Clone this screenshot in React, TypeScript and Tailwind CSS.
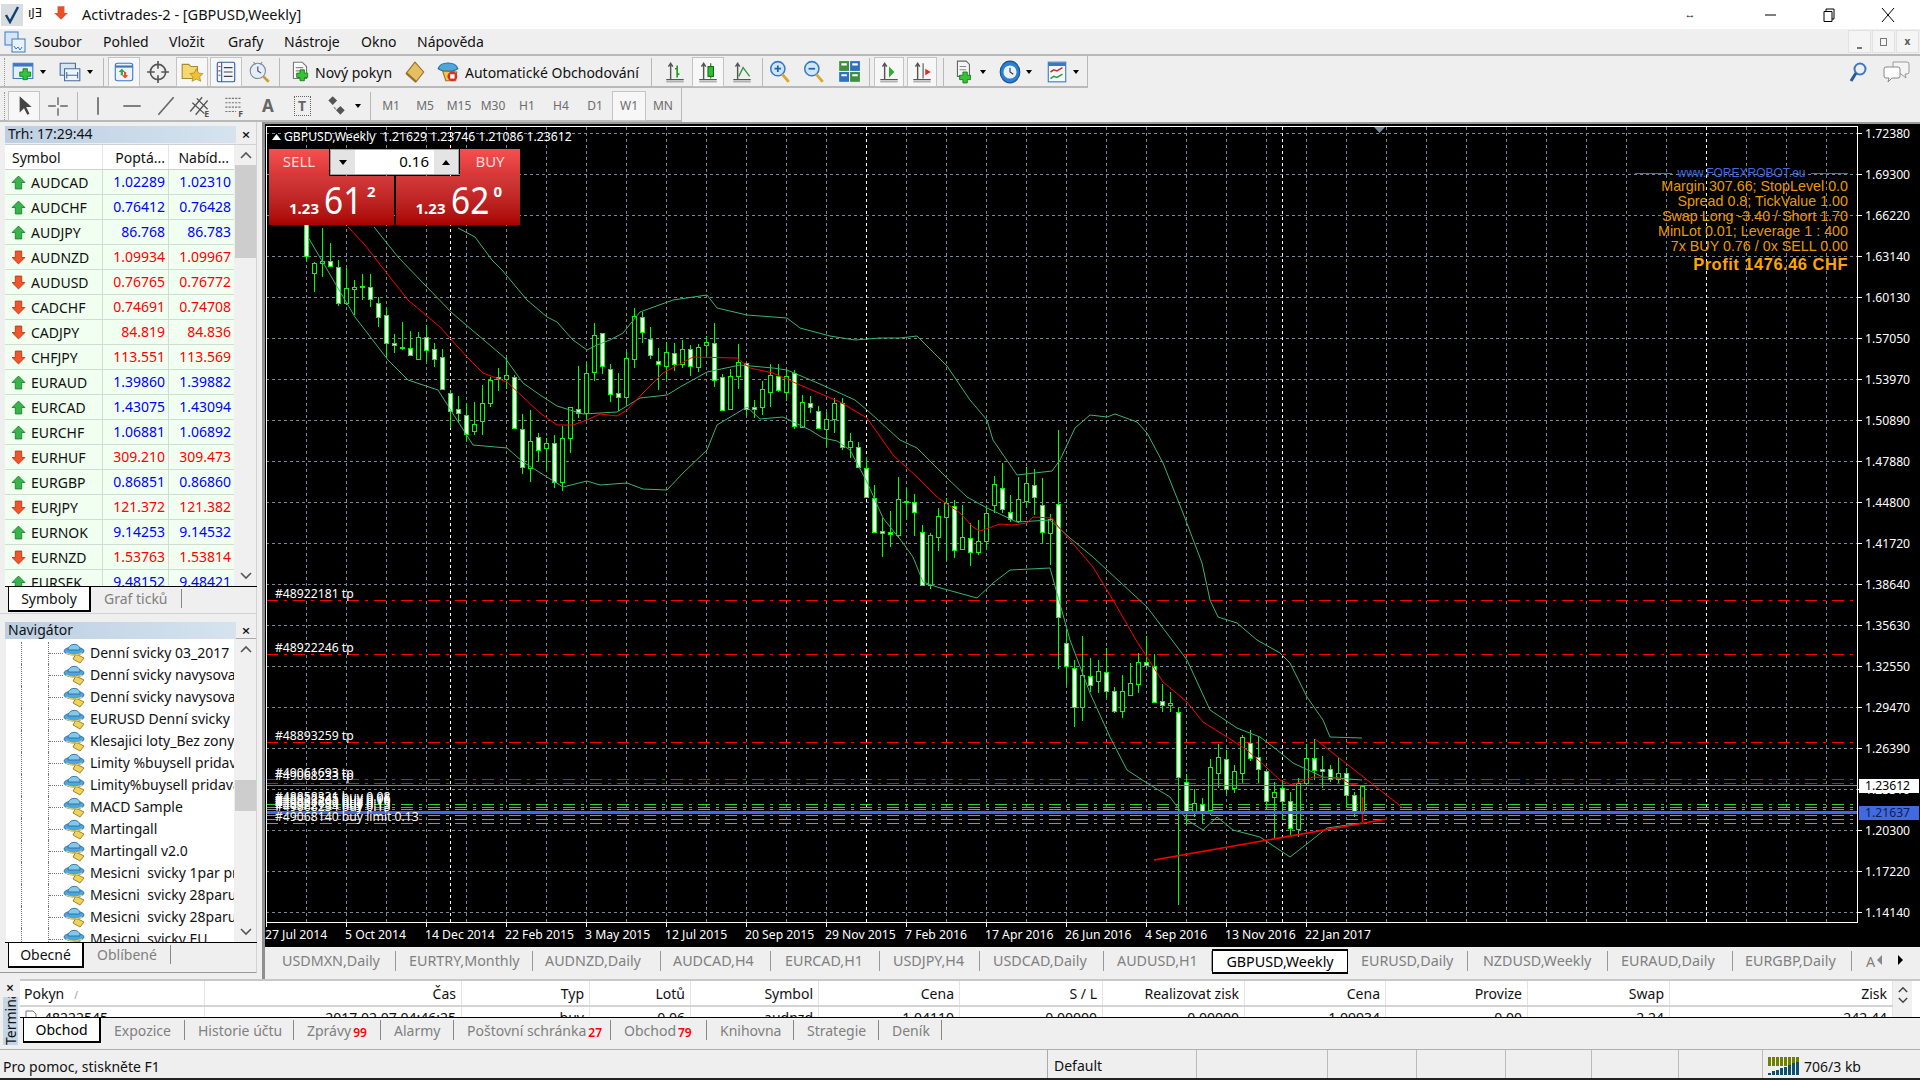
import type { ReactNode } from "react";

// [high, bodyTop, bodyBottom, low, white] in page pixels, first bar is at x=306, 8px apart
const bars: number[][] = [
  [200,200,256,262,1],[262,263,273,292,0],[228,261,263,277,0],[243,261,266,267,1],[260,267,303,306,1],
  [268,288,303,305,0],[280,287,289,315,0],[274,286,287,300,0],[274,287,299,307,1],[297,303,317,327,1],
  [307,315,343,357,1],[334,343,345,353,1],[322,347,348,350,0],[331,348,355,356,1],[332,337,359,360,0],
  [325,337,350,362,1],[343,349,359,367,1],[349,357,389,390,1],[390,393,411,428,1],[396,409,413,423,1],
  [403,415,434,441,1],[402,424,431,435,0],[385,403,421,435,0],[377,380,403,407,0],[368,377,379,391,1],
  [358,375,379,389,0],[375,377,428,428,1],[414,429,467,474,1],[410,441,468,482,0],[433,437,450,462,1],
  [438,443,448,471,0],[435,443,482,488,1],[426,438,482,491,0],[407,407,438,453,0],[366,409,413,418,1],
  [363,373,413,421,0],[323,335,372,381,0],[333,333,366,374,1],[364,369,394,402,1],[373,393,397,411,1],
  [352,358,397,404,0],[308,316,359,368,0],[312,317,332,343,1],[327,339,355,359,1],[348,361,364,390,1],
  [342,352,366,380,0],[343,353,364,371,1],[340,349,364,368,0],[345,349,366,376,1],[344,347,367,372,0],
  [336,342,345,357,0],[323,343,380,387,1],[374,377,410,411,1],[369,376,409,410,0],[344,362,376,389,0],
  [363,363,409,416,1],[400,407,409,418,1],[381,389,407,415,0],[364,375,392,407,0],[364,376,390,392,1],
  [369,376,392,401,0],[370,373,426,429,1],[395,402,427,428,0],[396,403,407,413,1],[406,411,428,429,1],
  [412,419,429,447,0],[398,403,419,433,0],[398,403,447,450,1],[433,441,447,458,0],[442,447,467,468,1],
  [457,468,497,498,1],[485,498,532,533,1],[518,531,533,557,1],[511,532,534,547,1],[477,499,535,537,0],
  [488,501,502,520,0],[494,502,512,536,1],[525,532,585,586,1],[533,535,585,589,0],[508,516,537,551,0],
  [498,503,517,561,0],[500,506,550,558,1],[505,537,549,550,0],[523,538,552,566,1],[520,541,552,555,0],
  [506,513,541,550,0],[476,484,505,513,0],[463,488,509,513,1],[495,512,519,522,1],[477,499,521,523,0],
  [467,483,501,508,0],[469,485,497,515,1],[478,505,532,543,1],[514,519,533,565,0],[430,504,617,669,1],
  [629,643,666,685,1],[660,668,707,727,1],[636,675,707,721,0],[658,676,685,692,1],[660,671,681,693,0],
  [648,672,691,698,1],[687,691,711,713,1],[675,691,711,718,0],[663,683,695,695,0],[653,662,684,693,0],
  [636,662,665,668,1],[654,666,702,702,1],[684,701,705,712,1],[692,703,705,712,0],[707,712,777,905,1],
  [774,782,812,825,1],[789,803,813,817,0],[798,804,812,823,1],[759,767,810,815,0],[744,757,773,788,0],
  [750,759,789,794,1],[765,771,788,793,0],[735,737,773,783,0],[730,743,758,761,1],[737,757,769,783,1],
  [769,771,801,810,1],[782,792,797,838,0],[780,788,801,820,1],[792,801,828,835,1],[778,783,829,837,0],
  [744,758,783,785,0],[739,758,770,780,1],[756,769,771,788,1],[765,769,779,782,1],[758,773,779,783,0],
  [768,773,795,807,1],[792,795,812,817,1],[785,786,812,822,0],
];

const maLine = "348,227 365,245 382,267 408,300 428,317 440,327 467,357 483,373 507,382 540,413 557,425 573,425 587,420 600,414 617,416 627,410 643,393 663,373 693,357 737,358 750,368 773,373 800,385 840,402 867,418 893,455 917,477 937,497 960,513 973,527 980,531 1000,524 1013,525 1027,523 1033,517 1052,518 1057,525 1070,540 1093,567 1113,600 1136,640 1163,682 1187,702 1203,722 1227,737 1247,750 1267,768 1280,780 1292,785 1313,777 1340,778 1350,784 1362,786";
const upperBand = "458,228 475,237 492,260 502,270 527,300 547,317 557,322 573,340 587,350 597,345 610,340 623,333 640,312 673,300 707,295 717,308 747,315 787,318 800,328 830,336 855,340 880,338 900,338 917,336 947,366 970,400 987,420 993,440 1017,475 1052,471 1060,460 1075,428 1090,415 1107,417 1115,414 1137,422 1147,433 1163,463 1183,513 1202,563 1210,600 1218,617 1237,623 1257,640 1280,653 1290,663 1307,697 1323,720 1330,737 1362,738";
const midBand = "374,227 398,257 452,313 505,358 523,383 540,395 557,406 583,414 617,412 640,398 667,395 680,387 707,372 740,365 773,368 787,370 820,384 855,400 867,410 900,440 917,448 947,478 967,497 987,508 1017,522 1050,520 1070,538 1093,557 1147,607 1172,640 1187,660 1210,710 1237,728 1260,737 1277,750 1293,763 1323,777 1362,780";
const lowerBand = "308,237 355,317 388,360 408,380 438,390 457,420 473,445 507,448 523,462 547,477 563,487 587,481 600,485 627,483 643,489 667,490 683,473 707,450 717,425 747,407 760,419 783,417 810,430 823,438 837,441 850,450 867,482 883,518 903,543 913,557 923,582 937,587 977,598 993,583 1010,570 1050,568 1070,640 1090,693 1110,737 1127,770 1147,783 1170,797 1187,820 1203,830 1217,817 1233,830 1260,837 1290,857 1303,847 1327,828 1362,823";

const prices = ["1.72380","1.69300","1.66220","1.63140","1.60130","1.57050","1.53970","1.50890","1.47880","1.44800","1.41720","1.38640","1.35630","1.32550","1.29470","1.26390","1.23310","1.20300","1.17220","1.14140"];
const dates = ["27 Jul 2014","5 Oct 2014","14 Dec 2014","22 Feb 2015","3 May 2015","12 Jul 2015","20 Sep 2015","29 Nov 2015","7 Feb 2016","17 Apr 2016","26 Jun 2016","4 Sep 2016","13 Nov 2016","22 Jan 2017"];
const orderLabels: [string, number][] = [
  ["#48922181 tp", 598],["#48922246 tp", 652],["#48893259 tp", 740],["#49061693 tp", 777],["#49068233 tp", 780],
  ["#48858331 buy 0.08", 801],["#48922545 buy 0.06", 803],["#48893262 buy 0.16", 805],["#49061690 buy 0.13", 807],["#48922183 buy 0.13", 809],["#49068234 buy 0.13", 811],["#49068140 buy limit 0.13", 821],
];

const symbols: [string, string, string, boolean][] = [
  ["AUDCAD","1.02289","1.02310",true],["AUDCHF","0.76412","0.76428",true],["AUDJPY","86.768","86.783",true],
  ["AUDNZD","1.09934","1.09967",false],["AUDUSD","0.76765","0.76772",false],["CADCHF","0.74691","0.74708",false],
  ["CADJPY","84.819","84.836",false],["CHFJPY","113.551","113.569",false],["EURAUD","1.39860","1.39882",true],
  ["EURCAD","1.43075","1.43094",true],["EURCHF","1.06881","1.06892",true],["EURHUF","309.210","309.473",false],
  ["EURGBP","0.86851","0.86860",true],["EURJPY","121.372","121.382",false],["EURNOK","9.14253","9.14532",true],
  ["EURNZD","1.53763","1.53814",false],["EURSEK","9.48152","9.48421",true],
];

const experts = ["Denní svicky 03_2017","Denní svicky navysovani","Denní svicky navysovani","EURUSD Denní svicky 1par","Klesajici loty_Bez zony","Limity %buysell pridavani","Limity%buysell pridavani","MACD Sample","Martingall","Martingall v2.0","Mesicni  svicky 1par pro","Mesicni  svicky 28paru","Mesicni  svicky 28paru","Mesicni  svicky EU"];

const chartTabs: [string, string, string][] = [
  ["USDMXN,Daily","w-[131px]","pl-[17px]"],["EURTRY,Monthly","w-[137px]","pl-[13px]"],["AUDNZD,Daily","w-[128px]","pl-[12px]"],["AUDCAD,H4","w-[110px]","pl-[12px]"],["EURCAD,H1","w-[109px]","pl-[14px]"],["USDJPY,H4","w-[100px]","pl-[13px]"],["USDCAD,Daily","w-[124px]","pl-[13px]"],["AUDUSD,H1","w-[108px]","pl-[13px]"],
];
const chartTabsAfter: [string, string, string][] = [
  ["EURUSD,Daily","w-[120px]","pl-[13px]"],["NZDUSD,Weekly","w-[140px]","pl-[15px]"],["EURAUD,Daily","w-[125px]","pl-[13px]"],["EURGBP,Daily","w-[119px]","pl-[12px]"],
];

const columns: [string, string, string][] = [
  ["Pokyn","","w-[185px]"],["Čas","2017.02.07 04:46:25","w-[257px]"],["Typ","buy","w-[128px]"],["Lotů","0.06","w-[101px]"],
  ["Symbol","audnzd","w-[128px]"],["Cena","1.04110","w-[141px]"],["S / L","0.00000","w-[143px]"],["Realizovat zisk","0.00000","w-[142px]"],
  ["Cena","1.09934","w-[141px]"],["Provize","0.00","w-[142px]"],["Swap","2.24","w-[142px]"],["Zisk","242.44","w-[223px]"],
];

const termTabs: [string, string, string?][] = [
  ["Expozice","w-[71px]"],["Historie účtu","w-[109px]"],["Zprávy","w-[87px]","99"],["Alarmy","w-[73px]"],["Poštovní schránka","w-[157px]","27"],["Obchod","w-[96px]","79"],["Knihovna","w-[87px]"],["Strategie","w-[85px]"],["Deník","w-[63px]"],
];

const Svg = ({ children, s = 24 }: { children: ReactNode; s?: number }) => (
  <svg width={s} height={s} viewBox="0 0 22 22">{children}</svg>
);

const Tool = ({ w, on, children }: { w: string; on?: boolean; children?: ReactNode }) => (
  <div className={`${w} h-[30px] flex items-center justify-center shrink-0 ${on ? "bg-[#f7f7f7] border border-[#c4c4c4]" : ""}`}>{children}</div>
);

const Drop = ({ w = "w-[8px]" }: { w?: string }) => (
  <div className={`${w} flex justify-center shrink-0`}>
    <div className="border-x-[3px] border-t-[4px] border-x-transparent border-t-black" />
  </div>
);

const Sep = ({ className = "" }: { className?: string }) => <div className={`w-px h-[28px] bg-[#b8b8b8] shrink-0 ${className}`} />;

const Grip = () => (
  <div className="w-[8px] h-[28px] shrink-0 flex justify-center">
    <div className="w-px h-full border-l border-dotted border-[#999]" />
  </div>
);

const PlusMark = ({ x = 10, y = 10 }: { x?: number; y?: number }) => (
  <path d={`M${x + 3} ${y}h4v3h3v4h-3v3h-4v-3h-3v-4h3z`} fill="#35c435" stroke="#1a7a1a" strokeWidth="0.8" />
);

const AxisIcon = ({ children }: { children?: ReactNode }) => (
  <Svg>
    <path d="M7 3v15M3 18h16M5 6l2-3 2 3" fill="none" stroke="#555" strokeWidth="1.3" />
    <path d="M3 20h16" stroke="#999" />
    {children}
  </Svg>
);

const ArrowUp = () => (
  <svg width="15" height="15" viewBox="0 0 14 14" className="shrink-0"><path d="M7 1l6 6h-3v6H4V7H1z" fill="#37b44a" stroke="#1e7a30" strokeWidth="0.8" /></svg>
);
const ArrowDown = () => (
  <svg width="15" height="15" viewBox="0 0 14 14" className="shrink-0"><path d="M4 1h6v6h3l-6 6-6-6h3z" fill="#f0562a" stroke="#b8341a" strokeWidth="0.8" /></svg>
);

const HatIcon = () => (
  <svg width="23" height="22" viewBox="0 0 23 22" className="shrink-0">
    <path d="M13 12l8 4-4 5-7-4z" fill="#f2d35a" stroke="#8f7a28" strokeWidth="0.9" />
    <ellipse cx="11" cy="9" rx="10" ry="4" fill="#4da6dc" stroke="#2b6ea3" strokeWidth="0.9" />
    <path d="M5 8c0-7 12-8 12 0z" fill="#86c8ea" stroke="#2b6ea3" strokeWidth="0.9" />
    <path d="M3 11c5 2.500 11 2.500 16 0" fill="none" stroke="#f2d35a" strokeWidth="1.200" />
  </svg>
);

const ScrollBar = ({ thumb, spacer }: { thumb: string; spacer: string }) => (
  <div className="w-[21px] h-full flex flex-col items-center shrink-0 bg-[#f0f0f0]">
    <div className="h-[20px] flex items-center justify-center shrink-0">
      <svg width="12" height="8" viewBox="0 0 12 8"><path d="M1 7l5-5 5 5" fill="none" stroke="#555" strokeWidth="1.6" /></svg>
    </div>
    <div className={`${spacer} shrink-0`} />
    <div className={`${thumb} w-full bg-[#cdcdcd] shrink-0`} />
    <div className="flex-1" />
    <div className="h-[20px] flex items-center justify-center shrink-0">
      <svg width="12" height="8" viewBox="0 0 12 8"><path d="M1 1l5 5 5-5" fill="none" stroke="#555" strokeWidth="1.6" /></svg>
    </div>
  </div>
);

const PanelTitle = ({ title }: { title: string }) => (
  <div className="flex items-center">
    <div className="w-[232px] ml-[5px] h-[17px] px-[3px] bg-gradient-to-r from-[#bccfe2] to-[#d6e3ef] text-[14px] leading-[15px] whitespace-nowrap">{title}</div>
    <div className="w-[20px] text-center text-[15px] leading-[17px] font-semibold">×</div>
  </div>
);

const PanelTabs = ({ first, second, w }: { first: string; second: string; w: string }) => (
  <div className="h-[26px] ml-[5px] w-[252px] border-t border-black flex text-[14px]">
    <div className={`${w} ml-[3px] h-[25px] bg-white border-l border-r-2 border-b-2 border-black flex items-center justify-center`}>{first}</div>
    <div className="h-[19px] mt-[2px] flex items-center px-[13px] border-r border-[#888] text-[#808080]">{second}</div>
  </div>
);

const Chart = () => (
  <svg width="1655" height="823" viewBox="265 124 1655 823" className="block font-['Noto_Sans',sans-serif]">
    <g shapeRendering="crispEdges">
      {prices.map((_, i) => (
        <line key={i} x1="266" x2="1858" y1={133.5 + Math.round(i * 40.98)} y2={133.5 + Math.round(i * 40.98)} stroke="#778899" strokeDasharray="3 3" />
      ))}
      {Array.from({ length: 39 }, (_, k) => (
        <line key={k} x1={306.5 + 40 * k} x2={306.5 + 40 * k} y1="127" y2="922" stroke="#778899" strokeDasharray="3 3" />
      ))}
      {[450.5, 866.5, 1282.5, 1706.5].map((x) => (
        <line key={x} x1={x} x2={x} y1="127" y2="922" stroke="#ffffff" strokeDasharray="3 3" />
      ))}
      {[600.5, 654.5, 742.5, 779.5, 783.5].map((y) => (
        <line key={y} x1="266" x2="1858" y1={y} y2={y} stroke="#ff0000" strokeDasharray="12 6 3 6" />
      ))}
      {[804.5, 807.5, 809.5, 815.5, 819.5, 823.5].map((y) => (
        <line key={y} x1="266" x2="1858" y1={y} y2={y} stroke="#32cd32" strokeDasharray="12 6 3 6" />
      ))}
      {bars.map(([h, t, b, l, w], i) => {
        const x = 306 + 8 * i;
        return (
          <g key={i}>
            <line x1={x + 0.5} x2={x + 0.5} y1={h} y2={l} stroke="#00ff00" />
            <rect x={x - 1.5} y={t + 0.5} width="4" height={Math.max(b - t, 1)} fill={w ? "#ffffff" : "#000000"} stroke="#00ff00" />
          </g>
        );
      })}
    </g>
    <g fill="none" strokeWidth="1">
      <polyline points={upperBand} stroke="#3cb371" />
      <polyline points={midBand} stroke="#3cb371" />
      <polyline points={lowerBand} stroke="#3cb371" />
      <polyline points={maLine} stroke="#ff0000" />
      <line x1="1315" y1="739" x2="1403" y2="808" stroke="#ff0000" />
      <line x1="1362.5" y1="797" x2="1362.5" y2="822" stroke="#ff0000" strokeWidth="1.5" />
      <line x1="1154" y1="860" x2="1387" y2="819" stroke="#ff0000" strokeWidth="1.6" />
    </g>
    <g shapeRendering="crispEdges">
      <line x1="266" x2="1858" y1="785.5" y2="785.5" stroke="#808080" strokeWidth="1" />
      <line x1="266" x2="1858" y1="812" y2="812" stroke="#4169e1" strokeWidth="3" />
      <rect x="266.5" y="126.5" width="1591" height="796" fill="none" stroke="#ffffff" />
      {prices.map((_, i) => (
        <line key={i} x1="1858" x2="1862" y1={133.5 + Math.round(i * 40.98)} y2={133.5 + Math.round(i * 40.98)} stroke="#ffffff" />
      ))}
      {dates.map((_, i) => (
        <line key={i} x1={266.5 + 80 * i} x2={266.5 + 80 * i} y1="922" y2="927" stroke="#ffffff" />
      ))}
    </g>
    <path d="M1374 127h11l-5.500 6z" fill="#778899" />
    <g fill="#ffffff" fontSize="12.2">
      {prices.map((p, i) => (
        <text key={p} x="1865" y={138 + Math.round(i * 40.98)}>{p}</text>
      ))}
      {dates.map((d, i) => (
        <text key={d} x={265 + 80 * i} y="939">{d}</text>
      ))}
      {orderLabels.map(([t, y]) => (
        <text key={t} x="275" y={y}>{t}</text>
      ))}
      <rect x="1859" y="779" width="60" height="14" fill="#ffffff" />
      <text x="1865" y="790" fill="#000000">1.23612</text>
      <rect x="1859" y="806" width="60" height="14" fill="#4169e1" />
      <text x="1865" y="817" fill="#10204a">1.21637</text>
    </g>
  </svg>
);

const InfoLine = ({ children }: { children: ReactNode }) => (
  <div className="h-[15px] leading-[15px] text-[14.3px] text-[#e69a00] font-['Liberation_Sans',sans-serif] text-right whitespace-nowrap">{children}</div>
);

const BigPrice = ({ digits, sup }: { digits: string; sup: string }) => (
  <div className="w-[125px] h-[49px] bg-gradient-to-b from-[#d33a3a] to-[#a80000] flex items-baseline pl-[20px] pt-[1px] text-white">
    <span className="text-[15px] font-bold w-[35px] shrink-0">1.23</span>
    <span className="text-[38px] leading-[44px] inline-block w-[43px] shrink-0 origin-left scale-x-[0.88]">{digits}</span>
    <span className="text-[15px] font-bold -translate-y-[17px]">{sup}</span>
  </div>
);

const App = () => {
  return (
    <div className="w-[1920px] h-[1080px] overflow-hidden flex flex-col bg-[#efefef] text-[#111] text-[14px] font-['Noto_Sans',sans-serif]">
      {/* title bar */}
      <div className="h-[29px] bg-white flex items-center shrink-0">
        <div className="w-[22px] h-[22px] ml-[1px] bg-[#d8dde2] flex items-center justify-center">
          <svg width="18" height="18" viewBox="0 0 18 18"><path d="M3 9l4 7L15 1" fill="none" stroke="#12406b" strokeWidth="2.4" /></svg>
        </div>
        <div className="w-[25px] ml-[5px] mt-[-4px] text-[13px] whitespace-nowrap">ıJƎ</div>
        <svg width="16" height="16" viewBox="0 0 14 14" className="mt-[-4px]"><path d="M4 1h6v6h3l-6 6-6-6h3z" fill="#e8502a" /></svg>
        <div className="ml-[13px] text-[14.5px] whitespace-nowrap">Activtrades-2 - [GBPUSD,Weekly]</div>
        <div className="ml-auto flex items-center">
          <div className="w-[30px] text-center text-[11px] font-bold mr-[59px]">↔</div>
          <svg width="14" height="14" viewBox="0 0 14 14" className="mr-[44px]"><path d="M1 7h11" stroke="#000" /></svg>
          <svg width="14" height="14" viewBox="0 0 14 14" className="mr-[44px]"><path d="M2 3.500h8v10H2zM4 3.500V1h8v10h-2" fill="none" stroke="#000" /></svg>
          <svg width="16" height="16" viewBox="0 0 16 16" className="mr-[24px]"><path d="M2 1l12 14M14 1L2 15" stroke="#000" /></svg>
        </div>
      </div>
      {/* menu */}
      <div className="h-[25px] flex items-center shrink-0 text-[14px]">
        <svg width="22" height="22" viewBox="0 0 22 22" className="ml-[4px]">
          <rect x="1" y="1" width="13" height="13" fill="#d6e6f7" stroke="#3b78c4" />
          <rect x="8" y="8" width="13" height="13" fill="#eaf2fb" stroke="#3b78c4" />
          <path d="M10 15l2 3 2-2 2 3 2-3" fill="none" stroke="#3b78c4" />
        </svg>
        <span className="ml-[8px] w-[69px]">Soubor</span>
        <span className="w-[66px]">Pohled</span>
        <span className="w-[59px]">Vložit</span>
        <span className="w-[56px]">Grafy</span>
        <span className="w-[77px]">Nástroje</span>
        <span className="w-[56px]">Okno</span>
        <span>Nápověda</span>
        <div className="ml-auto mr-[1px] flex gap-[1px] text-[10px] text-[#555] font-bold">
          <div className="w-[23px] h-[23px] bg-[#f5f5f5] border border-[#e2e2e2] flex items-end justify-center pb-[3px]"><div className="w-[5px] h-[2px] bg-[#777]" /></div>
          <div className="w-[23px] h-[23px] bg-[#f5f5f5] border border-[#e2e2e2] flex items-center justify-center"><div className="w-[7px] h-[8px] border border-[#777]" /></div>
          <div className="w-[23px] h-[23px] bg-[#f5f5f5] border border-[#e2e2e2] flex items-center justify-center">x</div>
        </div>
      </div>
      {/* main toolbar */}
      <div className="h-[34px] border-t-2 border-[#b9b9b9] flex items-center shrink-0">
        <div className="h-full w-[1088px] pt-[2px] flex items-center border-b-2 border-r border-[#b9b9b9] shrink-0">
          <Grip />
          <Tool w="w-[30px]"><Svg><path d="M2 3h18v14H2z" fill="#e4eefa" stroke="#3b78c4" /><path d="M2 3h18v3H2z" fill="#3b78c4" /><PlusMark x={8} y={8} /></Svg></Tool>
          <Drop w="w-[10px]" />
          <div className="ml-[6px]"><Tool w="w-[32px]"><Svg><path d="M2 3h14v11H2z" fill="#d7e4f3" stroke="#456c9a" /><path d="M6 8h14v11H6z" fill="#eef4fb" stroke="#456c9a" /><path d="M8 14h10M8 11v6M18 11v6" stroke="#456c9a" /></Svg></Tool></div>
          <Drop />
          <Sep className="ml-[9px]" />
          <div className="ml-[4px]"><Tool w="w-[32px]" on><Svg><rect x="3" y="3" width="16" height="16" rx="2" fill="#eef4fb" stroke="#3b78c4" /><path d="M3 6h16" stroke="#3b78c4" strokeWidth="2" /><path d="M9 8l3 3H10v3H8v-3H6z" fill="#2fa84a" /><path d="M12 17l-3-3h2v-3h2v3h2z" fill="#e8502a" /></Svg></Tool></div>
          <Tool w="w-[36px]"><Svg><circle cx="11" cy="11" r="7" fill="none" stroke="#555" strokeWidth="1.5" /><path d="M11 1v7M11 14v7M1 11h7M14 11h7" stroke="#555" strokeWidth="1.5" /></Svg></Tool>
          <Tool w="w-[32px]" on><Svg><path d="M2 4h6l2 2h6v11H2z" fill="#f6d873" stroke="#a88a2a" /><path d="M15 8l2 4 4 .5-3 3 1 4-4-2-4 2 1-4-3-3 4-.5z" fill="#f0c030" stroke="#a88a2a" strokeWidth="0.7" /></Svg></Tool>
          <div className="ml-[2px]"><Tool w="w-[32px]" on><Svg><rect x="3" y="2" width="16" height="18" rx="1.500" fill="#f2f6fb" stroke="#2f5f9a" /><path d="M7 2v18" stroke="#2f5f9a" /><path d="M9 7h8M9 11h8M9 15h8" stroke="#444" /><path d="M4 6h2M4 10h2M4 14h2" stroke="#d04020" /></Svg></Tool></div>
          <Tool w="w-[36px]"><Svg><circle cx="9" cy="10" r="7" fill="#e4eefa" stroke="#7a8a9a" /><path d="M9 6v4l3 2" fill="none" stroke="#445" /><path d="M14 15l5 5" stroke="#c9a030" strokeWidth="2.500" /><path d="M5 2l2 2M13 2l-2 2" stroke="#7a8a9a" /></Svg></Tool>
          <Sep className="ml-[1px]" />
          <div className="ml-[5px]"><Tool w="w-[30px]"><Svg><path d="M5 2h8l4 4v11H5z" fill="#fff" stroke="#777" /><path d="M7 7h7M7 10h7M7 13h4" stroke="#888" /><PlusMark x={8} y={9} /></Svg></Tool></div>
          <div className="w-[84px] whitespace-nowrap shrink-0 text-[14px]">Nový pokyn</div>
          <Tool w="w-[32px]"><Svg><path d="M3 12l8-10 8 9-7 9z" fill="#e6bf63" stroke="#96702a" /><path d="M3 12l9 8" stroke="#96702a" strokeWidth="2" /></Svg></Tool>
          <Tool w="w-[34px]"><Svg><path d="M2 8c2-7 16-7 18 0-4 3-14 3-18 0z" fill="#4da6dc" stroke="#2b6ea3" /><path d="M6 10l3 9h9l1-8z" fill="#f2c84a" stroke="#96702a" /><circle cx="15" cy="15" r="4.500" fill="#d83020" /><rect x="13" y="13" width="4" height="4" fill="#fff" /></Svg></Tool>
          <div className="w-[180px] whitespace-nowrap shrink-0 text-[14px]">Automatické Obchodování</div>
          <Sep className="ml-[6px]" />
          <div className="ml-[6px]"><Tool w="w-[34px]"><AxisIcon><path d="M13 5v11M11 8h2M13 13h2" stroke="#1aa01a" strokeWidth="1.500" /></AxisIcon></Tool></div>
          <Tool w="w-[32px]" on><AxisIcon><rect x="11" y="6" width="5" height="9" fill="#2fc02f" stroke="#167016" /><path d="M13.500 3v3M13.500 15v2" stroke="#167016" /></AxisIcon></Tool>
          <Tool w="w-[36px]"><AxisIcon><path d="M8 15l4-8 6 8" fill="none" stroke="#3a9a4a" strokeWidth="1.300" /></AxisIcon></Tool>
          <Sep className="ml-[2px]" />
          <Tool w="w-[34px]"><Svg><circle cx="9" cy="8" r="6.500" fill="#cfe6f8" stroke="#3b78c4" strokeWidth="1.400" /><path d="M6 8h6M9 5v6" stroke="#1f62b0" strokeWidth="1.600" /><path d="M13 13l6 7" stroke="#d8a830" strokeWidth="2.600" /></Svg></Tool>
          <Tool w="w-[34px]"><Svg><circle cx="9" cy="8" r="6.500" fill="#cfe6f8" stroke="#3b78c4" strokeWidth="1.400" /><path d="M6 8h6" stroke="#1f62b0" strokeWidth="1.600" /><path d="M13 13l6 7" stroke="#d8a830" strokeWidth="2.600" /></Svg></Tool>
          <Tool w="w-[36px]"><Svg><rect x="2" y="1" width="9" height="9" fill="#3f8f3f" /><rect x="12" y="1" width="9" height="9" fill="#2f6fc4" /><rect x="2" y="11" width="9" height="9" fill="#2f6fc4" /><rect x="12" y="11" width="9" height="9" fill="#3f8f3f" /><path d="M4 4h5M14 4h5M4 14h5M14 14h5" stroke="#fff" strokeWidth="2" /></Svg></Tool>
          <Sep className="ml-[2px]" />
          <div className="ml-[4px]"><Tool w="w-[30px]" on><AxisIcon><path d="M11 6l5 5-5 5z" fill="#2fb02f" /></AxisIcon></Tool></div>
          <div className="ml-[3px]"><Tool w="w-[30px]" on><AxisIcon><path d="M12 3v14" stroke="#555" /><path d="M19 11l-5-3v6z" fill="#d83020" /></AxisIcon></Tool></div>
          <Sep className="ml-[6px]" />
          <div className="ml-[4px]"><Tool w="w-[32px]"><Svg><path d="M5 1h8l3 3v11H5z" fill="#f4f4f4" stroke="#666" /><path d="M7 6h6M7 9h6" stroke="#888" /><PlusMark x={7} y={11} /></Svg></Tool></div>
          <Drop w="w-[6px]" />
          <div className="ml-[8px]"><Tool w="w-[32px]"><Svg><ellipse cx="11" cy="11" rx="9" ry="10" fill="#2d7fd0" stroke="#1a508f" /><circle cx="11" cy="11" r="6" fill="#e8f1fa" /><path d="M11 7v4l3 2" fill="none" stroke="#333" /></Svg></Tool></div>
          <Drop w="w-[6px]" />
          <div className="ml-[9px]"><Tool w="w-[32px]"><Svg><rect x="3" y="2" width="16" height="18" fill="#f5f8fc" stroke="#3b78c4" /><path d="M3 4h16" stroke="#3b78c4" strokeWidth="3" /><path d="M5 11l3-2 3 1 5-3" fill="none" stroke="#c83020" strokeWidth="1.400" /><path d="M5 17l3-2 3 1 5-3" fill="none" stroke="#2f9a3f" strokeWidth="1.400" /></Svg></Tool></div>
          <Drop w="w-[6px]" />
        </div>
        <div className="ml-auto flex items-center gap-[15px] mr-[9px]">
          <svg width="20" height="22" viewBox="0 0 20 22"><circle cx="12" cy="8" r="5.500" fill="none" stroke="#3a78c4" strokeWidth="2" /><path d="M8 12l-5 8" stroke="#2a5a9a" strokeWidth="3" /></svg>
          <svg width="28" height="24" viewBox="0 0 28 24"><path d="M10 2h14a2 2 0 0 1 2 2v8a2 2 0 0 1-2 2h-2l1 4-5-4h-8z" fill="#f4f4f4" stroke="#999" /><path d="M3 7h12a2 2 0 0 1 2 2v7a2 2 0 0 1-2 2H9l-4 4 1-4H3a2 2 0 0 1-2-2V9a2 2 0 0 1 2-2z" fill="#fff" stroke="#888" /></svg>
        </div>
      </div>
      {/* drawing toolbar */}
      <div className="h-[34px] flex items-center shrink-0">
        <div className="h-full w-[682px] pt-[3px] flex items-center border-r border-b-2 border-[#b9b9b9] shrink-0">
          <Grip />
          <Tool w="w-[32px]" on><Svg><path d="M7 2v15l4-4 3 6 2-1-3-6h5z" fill="#444" /></Svg></Tool>
          <Tool w="w-[36px]"><Svg><path d="M11 3v7M11 13v7M2 11h7M13 11h7" stroke="#666" strokeWidth="1.300" /></Svg></Tool>
          <Sep className="ml-[1px]" />
          <div className="ml-[3px]" />
          <Tool w="w-[34px]"><Svg><path d="M11 3v16" stroke="#666" strokeWidth="1.500" /></Svg></Tool>
          <Tool w="w-[34px]"><Svg><path d="M3 11h16" stroke="#666" strokeWidth="1.500" /></Svg></Tool>
          <Tool w="w-[34px]"><Svg><path d="M4 19L18 3" stroke="#666" strokeWidth="1.500" /></Svg></Tool>
          <Tool w="w-[34px]"><Svg><path d="M2 16L13 3M7 19L18 6M4 8l11 10M8 4l10 10" stroke="#555" strokeWidth="1.200" /><text x="15" y="21" fontSize="8" fontWeight="700" fill="#555">E</text></Svg></Tool>
          <Tool w="w-[34px]"><Svg><path d="M3 4h15M3 8h15M3 12h15M3 16h10" stroke="#777" strokeDasharray="2 1" /><text x="15" y="21" fontSize="8" fontWeight="700" fill="#555">F</text></Svg></Tool>
          <Tool w="w-[34px]"><span className="text-[17px] font-bold text-[#666]">A</span></Tool>
          <Tool w="w-[34px]"><div className="w-[17px] h-[20px] border border-dotted border-[#666] flex items-center justify-center text-[14px] font-bold text-[#666]">T</div></Tool>
          <Tool w="w-[34px]"><Svg><path d="M8 2l4 4-4 4-4-4zM15 11l4 4-4 4-4-4z" fill="#555" /><path d="M9 12l2 2" stroke="#888" /></Svg></Tool>
          <Drop w="w-[10px]" />
          <Sep className="ml-[7px]" />
          <div className="ml-[3px] flex text-[12px] text-[#6c6c6c]">
            {["M1","M5","M15","M30","H1","H4","D1","W1","MN"].map((t) => (
              <Tool key={t} w="w-[34px]" on={t === "W1"}>{t}</Tool>
            ))}
          </div>
        </div>
      </div>
      {/* workspace */}
      <div className="h-[857px] flex shrink-0">
        <div className="w-[265px] shrink-0 border-r-[3px] border-[#8f8f8f]">
          <div className="w-[257px] h-[492px] pt-[4px] border-r border-[#d4d4d4] border-b">
            <div className="h-[18px]"><PanelTitle title="Trh: 17:29:44" /></div>
            <div className="h-[442px] ml-[5px] flex border-t border-[#d0d0d0]">
              <div className="w-[229px] overflow-hidden bg-white shrink-0">
                <div className="h-[25px] flex items-center border-b border-[#d0d0d0] text-[14px]">
                  <div className="w-[98px] pl-[7px] border-r border-[#e6e6e6] h-full leading-[25px]">Symbol</div>
                  <div className="w-[66px] text-right pr-[3px] border-r border-[#e6e6e6] h-full leading-[25px] whitespace-nowrap">Poptá...</div>
                  <div className="w-[65px] text-right pr-[5px] h-full leading-[25px] whitespace-nowrap">Nabíd...</div>
                </div>
                {symbols.map(([s, bid, ask, up]) => (
                  <div key={s} className="h-[25px] flex items-center bg-[#f0fff0] border-b border-[#d3dcd3] text-[14px]">
                    <div className="w-[98px] pl-[6px] flex items-center gap-[5px] border-r border-[#d3dcd3] h-full"><span className="shrink-0">{up ? <ArrowUp /> : <ArrowDown />}</span>{s}</div>
                    <div className={`w-[66px] text-right pr-[3px] border-r border-[#d3dcd3] h-full leading-[24px] ${up ? "text-[#0000ff]" : "text-[#ff0000]"}`}>{bid}</div>
                    <div className={`w-[65px] text-right pr-[3px] h-full leading-[24px] ${up ? "text-[#0000ff]" : "text-[#ff0000]"}`}>{ask}</div>
                  </div>
                ))}
              </div>
              <div className="ml-[1px]"><ScrollBar spacer="h-0" thumb="h-[93px]" /></div>
            </div>
            <PanelTabs first="Symboly" second="Graf ticků" w="w-[83px]" />
          </div>
          <div className="w-[257px] h-[359px] pt-[8px] border-r border-[#d4d4d4] border-b border-b-[#999]">
            <div className="h-[16px]"><PanelTitle title="Navigátor" /></div>
            <div className="h-[304px] ml-[6px] flex border-t border-[#aaa]">
              <div className="w-[228px] overflow-hidden bg-white shrink-0 pt-[3px]">
                {experts.map((name, i) => (
                  <div key={i} className="h-[22px] flex text-[14px]">
                    <div className="w-[15px] shrink-0" />
                    <div className="w-[27px] shrink-0 border-l border-dotted border-[#777]" />
                    <div className="w-[15px] shrink-0 border-l border-dotted border-[#777] flex items-center">
                      <div className="w-full border-t border-dotted border-[#777]" />
                    </div>
                    <HatIcon />
                    <span className="ml-[4px] leading-[22px] whitespace-pre">{name}</span>
                  </div>
                ))}
              </div>
              <div className="ml-[1px]"><ScrollBar spacer="h-[121px]" thumb="h-[31px]" /></div>
            </div>
            <PanelTabs first="Obecné" second="Oblíbené" w="w-[76px]" />
          </div>
        </div>
        <div className="flex-1 flex flex-col min-w-0">
          <div className="h-[2px] bg-[#9a9a9a] shrink-0" />
          <div className="h-[823px] relative bg-black shrink-0">
            <Chart />
            {/* symbol line */}
            <div className="absolute left-[6px] top-[6px] flex items-center text-[12.2px] leading-[14px] text-white whitespace-pre">
              <svg width="11" height="8" viewBox="0 0 11 8" className="mr-[2px]"><path d="M1 7l4.500-6L10 7z" fill="#fff" /></svg>
              <span>GBPUSD,Weekly  1.21629 1.23746 1.21086 1.23612</span>
            </div>
            {/* one click trading */}
            <div className="absolute left-[4px] top-[25px] w-[251px] flex flex-col">
              <div className="h-[27px] flex">
                <div className="w-[60px] bg-gradient-to-b from-[#f55050] to-[#d83636] text-center text-[#ffdcdc] text-[15px] leading-[25px]">SELL</div>
                <div className="w-[129px] mx-[1px] h-[26px] bg-[#e4e4e4] border border-[#a0a0a0] flex items-center">
                  <div className="w-[24px] flex justify-center shrink-0"><div className="border-x-[4px] border-t-[5px] border-x-transparent border-t-black" /></div>
                  <div className="flex-1 h-full bg-white text-right pr-[5px] text-black text-[15px] leading-[23px]">0.16</div>
                  <div className="w-[24px] flex justify-center shrink-0"><div className="border-x-[4px] border-b-[5px] border-x-transparent border-b-black" /></div>
                </div>
                <div className="flex-1 bg-gradient-to-b from-[#f55050] to-[#d83636] text-center text-[#ffdcdc] text-[15px] leading-[25px]">BUY</div>
              </div>
              <div className="flex gap-[2px]">
                <BigPrice digits="61" sup="2" />
                <BigPrice digits="62" sup="0" />
              </div>
            </div>
            {/* account info comment */}
            <div className="absolute right-[72px] top-[44px] w-[213px] flex flex-col">
              <div className="h-[11px] flex items-center justify-between text-[#4169e1] text-[12px] leading-[11px] font-['Liberation_Sans',sans-serif]">
                <div className="w-[37px] border-t border-[#4169e1]" />
                <span>www.FOREXROBOT.eu</span>
                <div className="w-[37px] border-t border-[#4169e1]" />
              </div>
              <InfoLine>Margin 307.66; StopLevel 0.0</InfoLine>
              <InfoLine>Spread 0.8; TickValue 1.00</InfoLine>
              <InfoLine>Swap Long -3.40 / Short 1.70</InfoLine>
              <InfoLine>MinLot 0.01; Leverage 1 : 400</InfoLine>
              <InfoLine>7x BUY 0.76 / 0x SELL 0.00</InfoLine>
              <div className="mt-[1px] text-right text-[16.5px] leading-[18px] font-bold tracking-[0.5px] text-[#ffa500] font-['Liberation_Sans',sans-serif] whitespace-nowrap">Profit 1476.46 CHF</div>
            </div>
          </div>
          <div className="h-[32px] flex items-start pt-[2px] text-[14.3px] text-[#808080] whitespace-nowrap">
            {chartTabs.map(([t, w, p]) => (
              <div key={t} className={`${w} ${p} shrink-0 h-[20px] mt-[2px] flex items-center border-r border-[#999]`}>{t}</div>
            ))}
            <div className="w-[136px] h-[25px] shrink-0 bg-white border-t-2 border-b-2 border-x border-black flex items-center justify-center text-black">GBPUSD,Weekly</div>
            {chartTabsAfter.map(([t, w, p]) => (
              <div key={t} className={`${w} ${p} shrink-0 h-[20px] mt-[2px] flex items-center border-r border-[#999]`}>{t}</div>
            ))}
            <div className="w-[30px] mt-[2px] pl-[14px] overflow-hidden">A</div>
            <div className="mt-[6px] flex gap-[16px] ml-[-5px]">
              <div className="border-y-[5px] border-r-[5px] border-y-transparent border-r-[#888]" />
              <div className="border-y-[5px] border-l-[5px] border-y-transparent border-l-black" />
            </div>
          </div>
        </div>
      </div>
      {/* terminal */}
      <div className="h-[71px] flex shrink-0 border-b border-[#b0b0b0]">
        <div className="w-[20px] shrink-0 flex flex-col items-center">
          <div className="h-[18px] text-[14px] leading-[18px] font-semibold">×</div>
          <div className="h-[48px] w-[15px] bg-[#c5d6e8] overflow-hidden flex items-start justify-center">
            <span className="[writing-mode:vertical-rl] rotate-180 text-[14px] h-[48px] leading-[15px] overflow-hidden whitespace-nowrap">Terminál</span>
          </div>
        </div>
        <div className="flex-1 min-w-0 flex flex-col">
          <div className="h-[39px] bg-white border-t-2 border-[#c8c8c8] overflow-hidden flex shrink-0 border-b border-b-black">
            <div className="flex flex-col w-[1873px] shrink-0">
              <div className="h-[26px] flex shrink-0 border-b-2 border-[#d4d4d4] text-[14px]">
                {columns.map(([h, , w], i) => (
                  <div key={i} className={`${w} shrink-0 border-r border-[#e4e4e4] leading-[26px] whitespace-nowrap ${i === 0 ? "pl-[4px]" : "text-right pr-[5px]"}`}>
                    {h}{i === 0 && <span className="ml-[10px] text-[10px] text-[#999]">/</span>}
                  </div>
                ))}
              </div>
              <div className="h-[22px] flex shrink-0 text-[14px]">
                {columns.map(([, v, w], i) => (
                  <div key={i} className={`${w} shrink-0 border-r border-[#e4e4e4] leading-[22px] whitespace-nowrap ${i === 0 ? "pl-[4px] flex items-center gap-[6px]" : "text-right pr-[5px]"}`}>
                    {i === 0 ? (
                      <>
                        <svg width="14" height="16" viewBox="0 0 14 16"><path d="M2 1h7l3 3v11H2z" fill="#fff" stroke="#777" /></svg>
                        48222545
                      </>
                    ) : v}
                  </div>
                ))}
              </div>
            </div>
            <div className="w-[19px] shrink-0 flex flex-col items-center bg-[#f0f0f0] pt-[5px] gap-[4px]">
              <svg width="10" height="7" viewBox="0 0 12 8"><path d="M1 7l5-5 5 5" fill="none" stroke="#444" strokeWidth="1.800" /></svg>
              <svg width="10" height="7" viewBox="0 0 12 8"><path d="M1 1l5 5 5-5" fill="none" stroke="#444" strokeWidth="1.800" /></svg>
            </div>
          </div>
          <div className="flex items-start text-[14px] text-[#808080] whitespace-nowrap">
            <div className="ml-[3px] w-[78px] h-[25px] bg-white text-black border-l border-r-2 border-b-2 border-black flex items-center justify-center shrink-0">Obchod</div>
            <div className="w-[13px] shrink-0" />
            {termTabs.map(([t, w, n], i) => (
              <div key={i} className={`${w} h-[20px] mt-[2px] flex items-center border-r border-[#888] shrink-0 ${i === 0 ? "" : "pl-[13px]"}`}>
                {t}
                {n && <span className="ml-[2px] mt-[6px] text-[12px] font-semibold leading-[12px] text-[#ff0000]">{n}</span>}
              </div>
            ))}
          </div>
        </div>
      </div>
      {/* status bar */}
      <div className="h-[28px] flex items-center shrink-0 text-[14px]">
        <div className="w-[1047px] pl-[3px] pt-[4px] whitespace-nowrap shrink-0">Pro pomoc, stiskněte F1</div>
        <div className="w-[149px] h-full pl-[6px] leading-[32px] border-l border-[#aaa] shrink-0">Default</div>
        <div className="w-[131px] h-full border-l border-[#bbb] shrink-0" />
        <div className="w-[89px] h-full border-l border-[#bbb] shrink-0" />
        <div className="w-[89px] h-full border-l border-[#bbb] shrink-0" />
        <div className="w-[86px] h-full border-l border-[#bbb] shrink-0" />
        <div className="w-[87px] h-full border-l border-[#bbb] shrink-0" />
        <div className="w-[84px] h-full border-l border-[#bbb] shrink-0" />
        <div className="flex-1 h-full border-l border-[#bbb] flex items-center pl-[5px] pt-[4px] gap-[4px]">
          <svg width="32" height="20" viewBox="0 0 32 20" shapeRendering="crispEdges">
            {[0, 1, 2, 3, 4, 5, 6, 7].map((k) => (
              <g key={k}>
                <rect x={k * 4} y="1" width="3" height={9} fill="#6f8000" />
                <rect x={k * 4} y={17 - k * 1.6} width="3" height={2 + k * 1.6} fill="#0f4f70" />
              </g>
            ))}
          </svg>
          <span>706/3 kb</span>
        </div>
      </div>
      <div className="h-[2px] bg-[#222] shrink-0" />
    </div>
  );
};

export default App;
